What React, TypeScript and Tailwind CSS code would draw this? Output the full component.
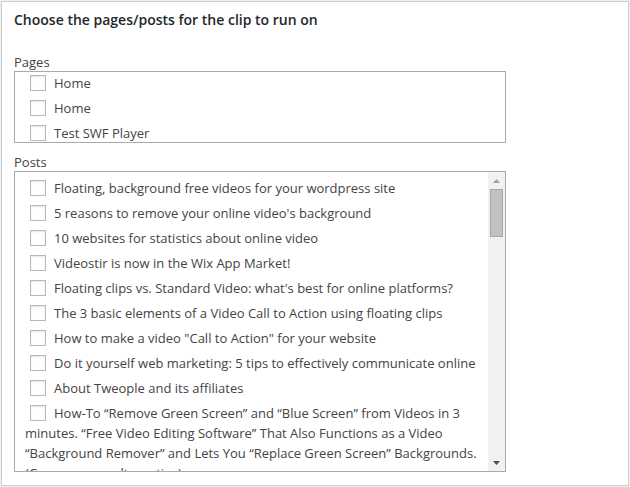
const pages = ["Home", "Home", "Test SWF Player"];

const posts = [
  "Floating, background free videos for your wordpress site",
  "5 reasons to remove your online video's background",
  "10 websites for statistics about online video",
  "Videostir is now in the Wix App Market!",
  "Floating clips vs. Standard Video: what's best for online platforms?",
  "The 3 basic elements of a Video Call to Action using floating clips",
  'How to make a video "Call to Action" for your website',
  "Do it yourself web marketing: 5 tips to effectively communicate online",
  "About Tweople and its affiliates",
  "How-To \u201cRemove Green Screen\u201d and \u201cBlue Screen\u201d from Videos in 3 minutes. \u201cFree Video Editing Software\u201d That Also Functions as a Video \u201cBackground Remover\u201d and Lets You \u201cReplace Green Screen\u201d Backgrounds. (Green screen alternative)",
];

const Item = ({ label }: { label: string }) => (
  <li className="mb-[5px] pl-[10px] leading-[20px]">
    <label>
      <input
        type="checkbox"
        className="ml-[5px] mr-[8px] inline-block h-4 w-4 appearance-none border border-[#b4b9be] bg-white align-[-3px] shadow-[inset_0_1px_2px_rgba(0,0,0,0.1)]"
      />
      {label}
    </label>
  </li>
);

export default function App() {
  return (
    <div className="h-[487px] w-[630px] bg-[#f1f1f1] pl-px pt-px font-['Open_Sans',sans-serif] text-[13px] text-[#444]">
      <div className="h-[485px] w-[628px] border border-[#ccc] bg-white px-[12px] pt-[8px]">
        <h3 className="text-[14px] font-semibold leading-[20px] text-[#23282d]">
          Choose the pages/posts for the clip to run on
        </h3>

        <p className="mt-[23px] leading-[18px]">Pages</p>
        <div className="h-[72px] w-[492px] overflow-hidden border border-[#aaa] pt-[1px]">
          <ul>
            {pages.map((p, i) => (
              <Item key={i} label={p} />
            ))}
          </ul>
        </div>

        <p className="mt-[10px] leading-[18px]">Posts</p>
        <div className="flex h-[301px] w-[492px] overflow-hidden border border-[#aaa]">
          <ul className="flex-1 pt-[6px] pr-[4px]">
            {posts.map((p, i) => (
              <Item key={i} label={p} />
            ))}
          </ul>
          <div className="flex w-[17px] shrink-0 flex-col items-center bg-[#f1f1f1]">
            <div className="flex h-[17px] w-full items-center justify-center">
              <svg width="7" height="4" viewBox="0 0 7 4">
                <path d="M3.5 0L7 4H0z" fill="#a3a3a3" />
              </svg>
            </div>
            <div className="h-[48px] w-[13px] border border-[#a8a8a8] bg-[#c1c1c1]" />
            <div className="flex-1" />
            <div className="flex h-[17px] w-full items-center justify-center">
              <svg width="7" height="4" viewBox="0 0 7 4">
                <path d="M0 0H7L3.5 4z" fill="#505050" />
              </svg>
            </div>
          </div>
        </div>
      </div>
    </div>
  );
}
